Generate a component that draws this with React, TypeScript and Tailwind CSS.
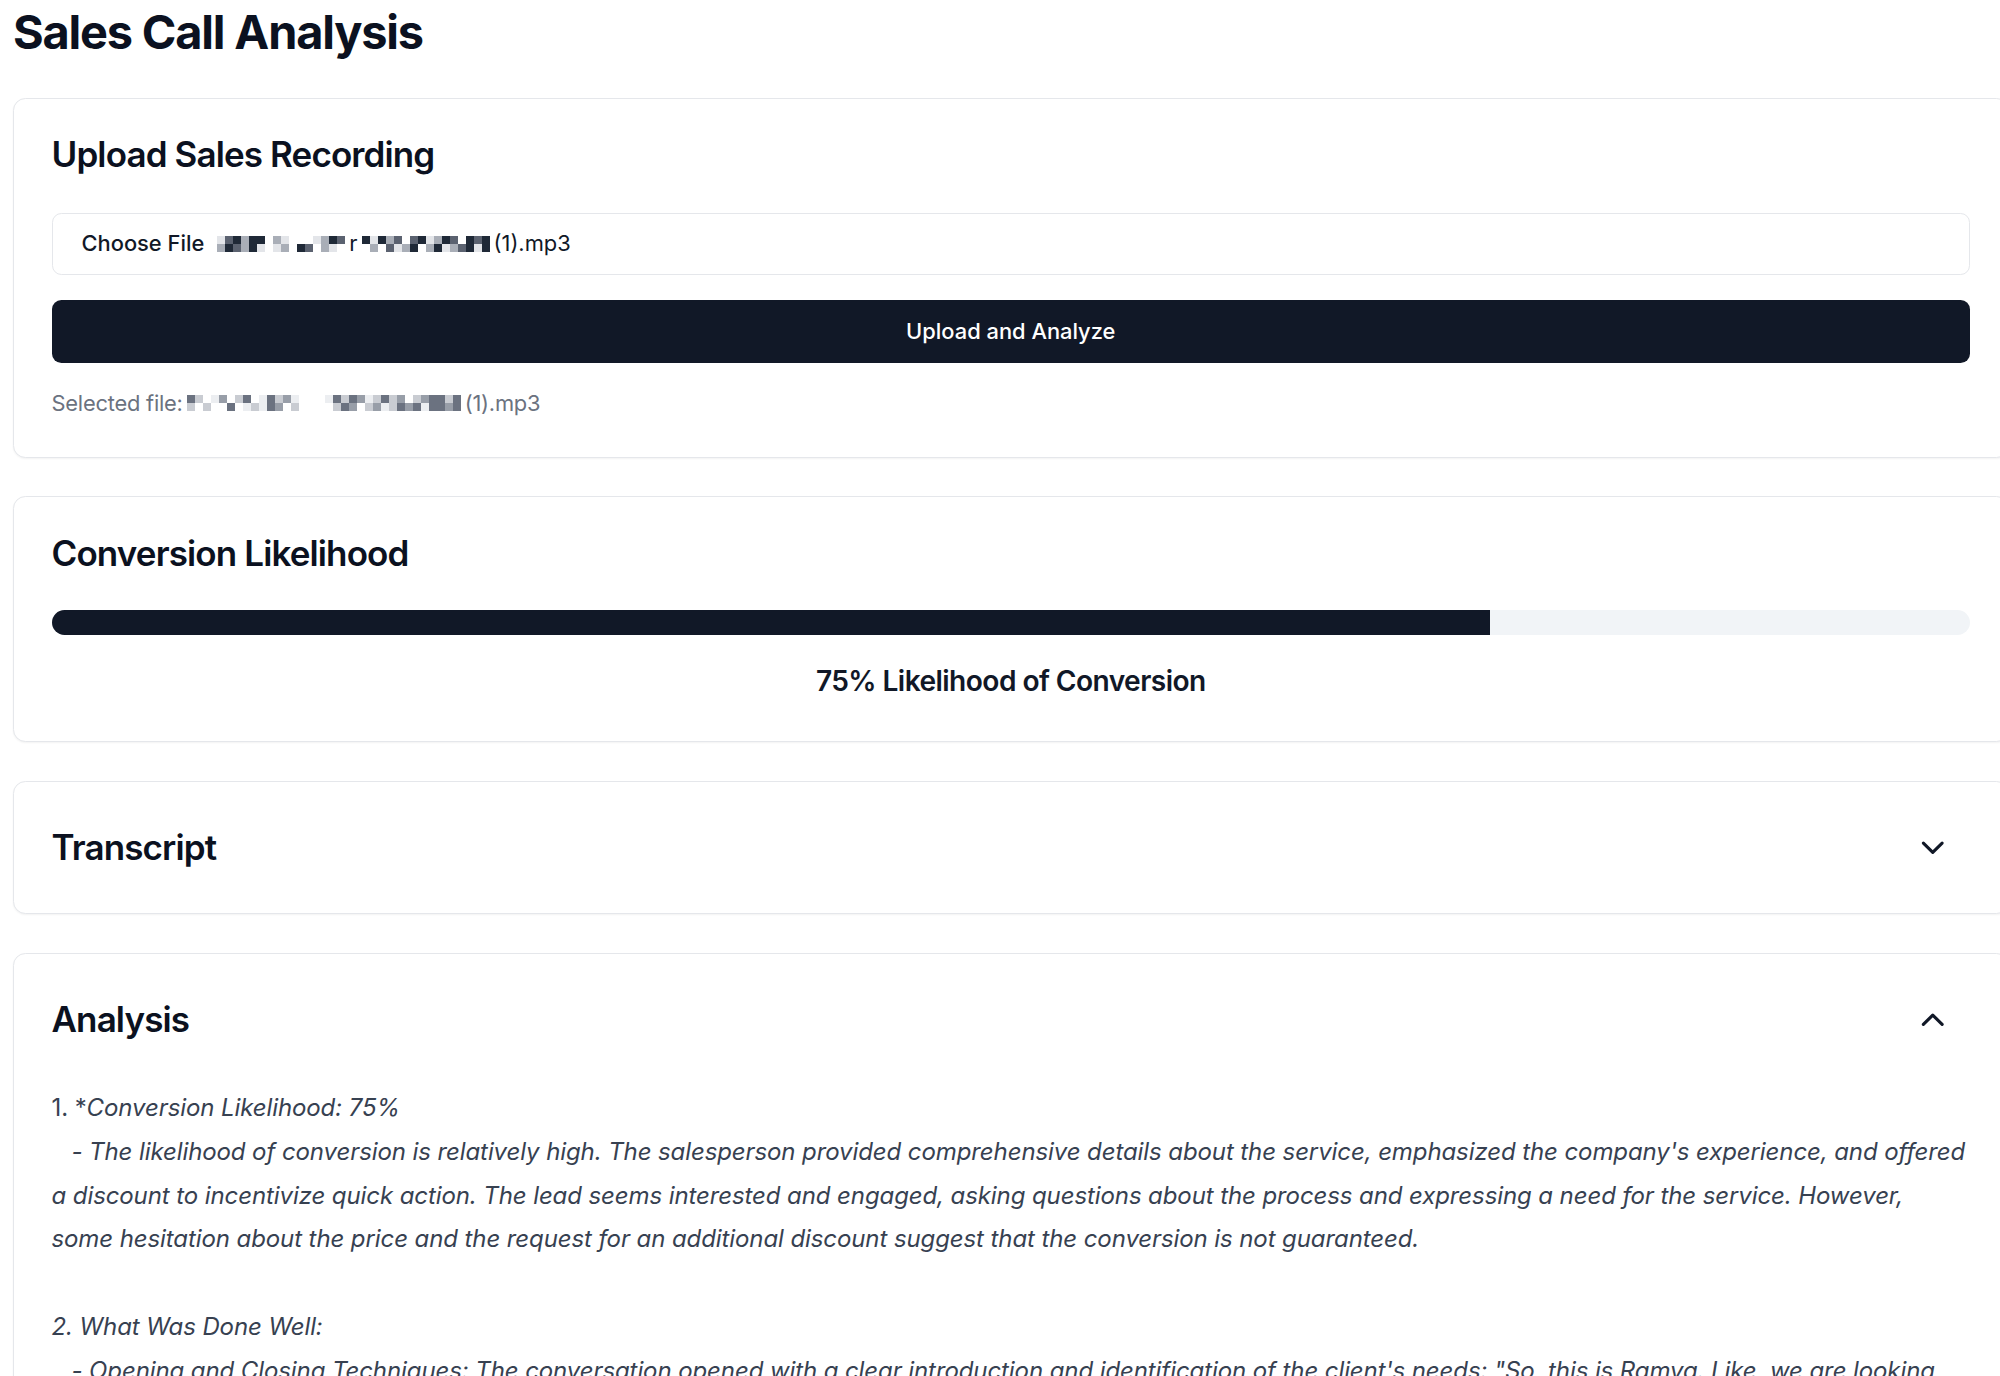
import React from 'react';
import { ChevronDown, ChevronUp } from 'lucide-react';

// pixelated (redacted) file name blocks
const darkTones: Record<string, string> = {
  '#': 'bg-[#1f2937]',
  '+': 'bg-[#5b6270]',
  ':': 'bg-[#a9aeb7]',
  '.': 'bg-[#e3e5e9]',
  ' ': 'bg-transparent',
};

const lightTones: Record<string, string> = {
  '#': 'bg-[#6b7280]',
  '+': 'bg-[#989ea8]',
  ':': 'bg-[#c9ccd2]',
  '.': 'bg-[#eceef1]',
  ' ': 'bg-transparent',
};

const Mosaic = ({ rows, light }: { rows: string[]; light?: boolean }) => {
  const tones = light ? lightTones : darkTones;
  return (
    <div className="flex flex-col">
      {rows.map((row, i) => (
        <div key={i} className="flex">
          {row.split('').map((c, j) => (
            <div key={j} className={`h-[8px] w-[8px] ${tones[c] || 'bg-transparent'}`} />
          ))}
        </div>
      ))}
    </div>
  );
};

const Card = ({ children }: { children: React.ReactNode }) => (
  <div className="rounded-[12.5px] border border-[#e5e7eb] bg-white shadow-[0_1px_2px_0_rgba(0,0,0,0.05)]">
    {children}
  </div>
);

const CardTitle = ({ children }: { children: React.ReactNode }) => (
  <h3 className="text-[35px] font-semibold leading-[37.5px] tracking-tight text-[#0b1120]">
    {children}
  </h3>
);

const CollapseHeader = ({ title, open }: { title: string; open?: boolean }) => (
  <div className="flex items-center justify-between p-[37.5px]">
    <CardTitle>{title}</CardTitle>
    <button className="flex h-[56.25px] items-center rounded-[9.375px] px-[18.75px] text-[#111827]">
      {open ? (
        <ChevronUp className="h-[37.5px] w-[37.5px]" strokeWidth={2} />
      ) : (
        <ChevronDown className="h-[37.5px] w-[37.5px]" strokeWidth={2} />
      )}
    </button>
  </div>
);

const analysisText = `Conversion Likelihood: 75%
   - The likelihood of conversion is relatively high. The salesperson provided comprehensive details about the service, emphasized the company's experience, and offered a discount to incentivize quick action. The lead seems interested and engaged, asking questions about the process and expressing a need for the service. However, some hesitation about the price and the request for an additional discount suggest that the conversion is not guaranteed.

2. What Was Done Well:
   - Opening and Closing Techniques: The conversation opened with a clear introduction and identification of the client's needs: "So, this is Ramya. Like, we are looking for someone to handle this for us." The salesperson closed by summarizing the offer and the next steps.`;

export default function App() {
  return (
    <div className="h-screen w-full overflow-hidden bg-white font-['Inter','Noto_Sans',sans-serif] text-[#111827]">
      <div className="w-[2022px] pl-[13px] pt-[4px]">
        <h1 className="mb-[37.5px] text-[46.875px] font-bold leading-[56.25px] tracking-tight text-[#0b1120]">
          Sales Call Analysis
        </h1>

        <div className="flex w-[1995.5px] flex-col gap-[38.75px]">
          <Card>
            <div className="px-[37.5px] pb-[39px] pt-[37.5px]">
              <CardTitle>Upload Sales Recording</CardTitle>
            </div>
            <div className="flex flex-col gap-[25px] px-[37.5px] pb-[37.5px]">
              <div className="flex h-[62.5px] items-center rounded-[9.375px] border border-[#e5e7eb] pl-[29px] text-[21.875px] leading-[31.25px]">
                <span className="font-medium">Choose File</span>
                <div className="ml-[13px] flex items-center">
                  <Mosaic rows={['.+#:## :.   .:#+', ':#+:#. .: #+ :. ']} />
                  <span className="mx-[4px]">r</span>
                  <Mosaic rows={['#.#:+ +#.:#+ #+#', ' : +.:# :#.:+#.#']} />
                </div>
                <span className="ml-[4px]">(1).mp3</span>
              </div>

              <button className="h-[62.5px] w-full rounded-[9.375px] bg-[#111827] text-[21.875px] font-medium text-white">
                Upload and Analyze
              </button>

              <div className="flex items-center text-[21.875px] leading-[31.25px] tracking-[-0.01em] text-[#6b7280]">
                <span>Selected file:</span>
                <div className="ml-[4px] flex items-center">
                  <Mosaic light rows={['#: .+ :# .#:+.', ': :  # .:.#+ :']} />
                  <div className="w-[26px]" />
                  <Mosaic light rows={['.#:#+.:#:+ :+##:#', ' :#+ :+.:#+#.##+#']} />
                </div>
                <span className="ml-[4px]">(1).mp3</span>
              </div>
            </div>
          </Card>

          <Card>
            <div className="p-[37.5px]">
              <CardTitle>Conversion Likelihood</CardTitle>
            </div>
            <div className="px-[37.5px] pb-[37.5px]">
              <div className="h-[25px] w-full overflow-hidden rounded-full bg-[#f1f4f7]">
                <div className="h-full w-[75%] bg-[#111827]" />
              </div>
              <p className="mt-[25px] text-center text-[28.125px] font-semibold leading-[43.75px] tracking-[-0.02em]">
                75% Likelihood of Conversion
              </p>
            </div>
          </Card>

          <Card>
            <CollapseHeader title="Transcript" />
          </Card>

          <Card>
            <CollapseHeader title="Analysis" open />
            <div className="whitespace-pre-wrap px-[37.5px] pb-[37.5px] pt-[1px] text-[24px] leading-[43.75px] tracking-[-0.004em] text-[#374151]">
              1. *<em>{analysisText}</em>
            </div>
          </Card>
        </div>
      </div>
    </div>
  );
}
